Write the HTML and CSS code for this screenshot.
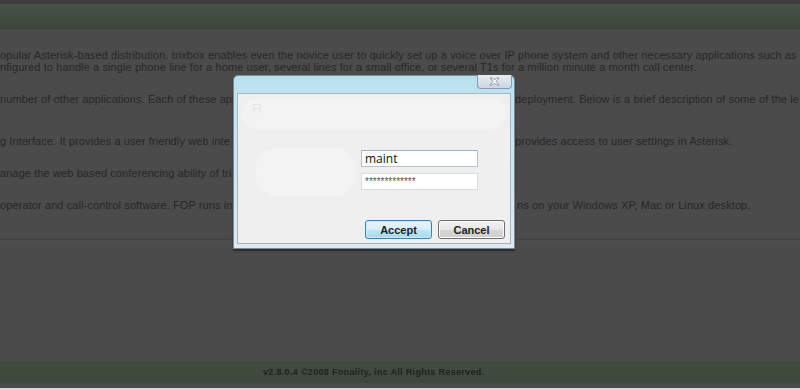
FILE: index.html
```html
<!DOCTYPE html>
<html lang="en">
<head>
  <meta charset="UTF-8">
  <title>trixbox</title>
  <link rel="stylesheet" href="styles.css">
</head>
<body>
  <div class="topstrip"></div>
  <div class="banner"></div>

  <div class="content">
    <p class="line">opular Asterisk-based distribution. trixbox enables even the novice user to quickly set up a voice over IP phone system and other necessary applications such as</p>
    <p class="line tight">nfigured to handle a single phone line for a home user, several lines for a small office, or several T1s for a million minute a month call center.</p>

    <p class="split">
      <span class="left">number of other applications. Each of these app</span>
      <span class="right">deployment. Below is a brief description of some of the le</span>
    </p>

    <p class="split gap">
      <span class="left">g Interface. It provides a user friendly web inte</span>
      <span class="right">provides access to user settings in Asterisk.</span>
    </p>

    <p class="split">
      <span class="left">anage the web based conferencing ability of tri</span>
    </p>

    <p class="split">
      <span class="left">operator and call-control software. FOP runs in</span>
      <span class="right shift">ns on your Windows XP, Mac or Linux desktop.</span>
    </p>
  </div>

  <div class="rule"></div>
  <div class="fill"></div>

  <div class="footer">v2.8.0.4 &copy;2008 Fonality, inc All Rights Reserved.</div>
  <div class="under"></div>
  <div class="edge"></div>

  <!-- login prompt -->
  <div class="dialog">
    <div class="close">
      <svg width="11" height="9" viewBox="0 0 11 9">
        <path d="M1 1 H3.5 L5.5 3 L7.5 1 H10 L7 4.5 L10 8 H7.5 L5.5 6 L3.5 8 H1 L4 4.5 Z" fill="#fff" stroke="#7d8a96" stroke-width="0.9" stroke-linejoin="round"/>
      </svg>
    </div>
    <div class="dialog-body">
      <div class="ghost-top">Fl</div>
      <div class="fields">
        <div class="ghost-left"></div>
        <div class="inputs">
          <input class="box" type="text" value="maint">
          <input class="box pass" type="text" value="*************">
        </div>
      </div>
      <div class="buttons">
        <button class="btn accept">Accept</button>
        <button class="btn">Cancel</button>
      </div>
    </div>
  </div>
</body>
</html>
```

FILE: styles.css
```css
html, body {
  margin: 0;
  padding: 0;
}

body {
  height: 390px;
  overflow: hidden;
  display: flex;
  flex-direction: column;
  background-color: #4b4b4b;
  color: #272727;
  font-family: "Liberation Sans", Arial, sans-serif;
  font-size: 11px;
}

.topstrip {
  height: 4px;
  background-color: #3c3c3c;
}

.banner {
  height: 24px;
  background: linear-gradient(#48524a, #3c4639);
  border-bottom: 1px solid #363d34;
}

.content {
  padding: 20px 0 8px 0;
  letter-spacing: 0.1px;
}

.content p {
  margin: 0 0 20px 0;
  line-height: 12px;
  white-space: nowrap;
}

.content p.tight {
  margin-top: -20px;
}

.content p.gap {
  margin-top: 30px;
}

.split {
  display: flex;
}

.split .left {
  width: 234px;
  flex-shrink: 0;
}

.split .right {
  margin-left: 281px;
}

.split .shift {
  margin-left: 283px;
}

.rule {
  height: 1px;
  background-color: #414141;
  border-bottom: 1px solid #4e4e4e;
}

.fill {
  flex: 1;
}

.footer {
  height: 22px;
  line-height: 22px;
  padding-left: 263px;
  background: linear-gradient(#414b3e, #3f483c);
  border-top: 1px solid #465043;
  color: #222;
  font-size: 9px;
  font-weight: bold;
  letter-spacing: 0.32px;
}

.under {
  height: 5px;
  background-color: #4a4a4a;
}

.edge {
  height: 2px;
  background-color: #d6d6d6;
}

/* dialog */
.dialog {
  position: absolute;
  left: 233px;
  top: 75px;
  width: 274px;
  height: 151px;
  padding: 17px 3px 4px 3px;
  background: linear-gradient(#b6e0ef, #c0e4f1 12%, #dfe9f0);
  border: 1px solid #7d8b97;
  border-radius: 5px 5px 0 0;
  box-shadow: 0 2px 2px rgba(0, 0, 0, 0.45);
}

.close {
  position: absolute;
  right: 2px;
  top: -1px;
  width: 33px;
  height: 13px;
  display: flex;
  align-items: center;
  justify-content: center;
  background: linear-gradient(#e6edf3, #c9d7e3);
  border: 1px solid #8b9bab;
  border-top: none;
  border-radius: 0 0 4px 4px;
}

.dialog-body {
  height: 149px;
  display: flex;
  flex-direction: column;
  background-color: #efefef;
  border: 1px solid #a6b5c2;
}

.ghost-top {
  height: 31px;
  margin: 4px 4px 0 4px;
  padding-left: 10px;
  line-height: 22px;
  border-radius: 16px;
  background-color: #f3f3f3;
  color: #e4e4e4;
  font-family: "Open Sans", sans-serif;
  font-size: 12px;
}

.fields {
  display: flex;
  margin-top: 21px;
}

.ghost-left {
  width: 100px;
  height: 48px;
  margin: -2px 0 0 18px;
  border-radius: 20px;
  background-color: #f3f3f3;
}

.inputs {
  display: flex;
  flex-direction: column;
  gap: 6px;
  margin-left: 5px;
}

.box {
  box-sizing: border-box;
  width: 117px;
  height: 17px;
  margin: 0;
  padding: 0 3px;
  background-color: #fff;
  border: 1px solid #b7c4ce;
  border-top-color: #9fb1c0;
  font-family: "Open Sans", "Liberation Sans", sans-serif;
  font-size: 12px;
  color: #111;
}

.box.pass {
  font-family: "Liberation Sans", sans-serif;
  font-size: 10px;
  color: #555;
  border-color: #d8dde2;
}

.buttons {
  display: flex;
  justify-content: flex-end;
  gap: 6px;
  margin-top: auto;
  padding: 0 5px 4px 0;
}

.btn {
  width: 67px;
  height: 19px;
  padding: 0;
  border: 1px solid #707070;
  border-radius: 3px;
  background: linear-gradient(#f3f3f3, #e6e6e6 50%, #d6d6d6 51%, #cfcfcf);
  box-shadow: inset 0 0 0 1px #fbfbfb;
  font-family: "Liberation Sans", Arial, sans-serif;
  font-size: 11px;
  font-weight: bold;
  color: #1e1e1e;
}

.btn.accept {
  border-color: #3c7fb1;
  background: linear-gradient(#e8f5fc, #d6eefb 50%, #bee4f8 51%, #a9d9f2);
  box-shadow: inset 0 0 0 1px #c5f1ff;
}
```
